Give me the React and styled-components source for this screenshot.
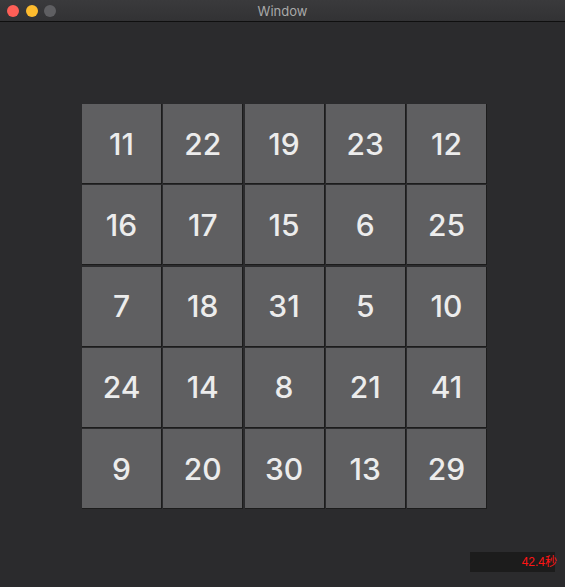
import React from 'react';
import styled, { createGlobalStyle } from 'styled-components';

const GlobalStyle = createGlobalStyle`
  html, body {
    margin: 0;
    padding: 0;
    width: 100%;
    height: 100%;
    background: #2b2b2d;
    overflow: hidden;
  }
  #root {
    height: 100%;
  }
`;

const Frame = styled.div`
  display: flex;
  flex-direction: column;
  width: 565px;
  height: 587px;
  background: #2b2b2d;
  font-family: Inter, 'Liberation Sans', sans-serif;
`;

const TitleBar = styled.div`
  position: relative;
  display: flex;
  align-items: center;
  height: 21px;
  padding-left: 7px;
  gap: 6.5px;
  background: linear-gradient(#3a3a3c, #323234);
  border-bottom: 1px solid #0f0f0f;
`;

const Light = styled.span`
  width: 12px;
  height: 12px;
  border-radius: 50%;
  background: ${(p) => p.color};
`;

const Title = styled.div`
  position: absolute;
  left: 0;
  right: 0;
  text-align: center;
  font-size: 13px;
  color: #a9a9a9;
  pointer-events: none;
`;

const Body = styled.div`
  flex: 1;
  display: flex;
  flex-direction: column;
  padding-top: 82px;
`;

const Board = styled.div`
  display: grid;
  grid-template-columns: repeat(5, 80px);
  grid-auto-rows: 80px;
  gap: 1.25px;
  margin-left: 82px;
`;

const Tile = styled.div`
  display: flex;
  align-items: center;
  justify-content: center;
  background: #5f5f61;
  border-right: 1px solid #1c1c1c;
  border-bottom: 1px solid #1c1c1c;
  color: #ececec;
  font-size: 30px;
  font-weight: 450;
`;

const Footer = styled.div`
  display: flex;
  justify-content: flex-end;
  margin-top: 43px;
  padding-right: 10px;
`;

const Timer = styled.div`
  width: 85px;
  height: 20px;
  line-height: 20px;
  background: #1c1c1c;
  color: #ff1414;
  font-family: 'Liberation Sans', 'Noto Sans CJK SC', sans-serif;
  font-size: 12px;
  text-align: right;
`;

const TimerText = styled.span`
  position: relative;
  left: 2px;
`;

const numbers = [
  11, 22, 19, 23, 12,
  16, 17, 15, 6, 25,
  7, 18, 31, 5, 10,
  24, 14, 8, 21, 41,
  9, 20, 30, 13, 29,
];

export default function App() {
  return (
    <Frame>
      <GlobalStyle />
      <TitleBar>
        <Light color="#fe5f57" />
        <Light color="#febc2e" />
        <Light color="#5f5f62" />
        <Title>Window</Title>
      </TitleBar>
      <Body>
        <Board>
          {numbers.map((n, i) => (
            <Tile key={i}>{n}</Tile>
          ))}
        </Board>
        <Footer>
          <Timer>
            <TimerText>42.4秒</TimerText>
          </Timer>
        </Footer>
      </Body>
    </Frame>
  );
}
